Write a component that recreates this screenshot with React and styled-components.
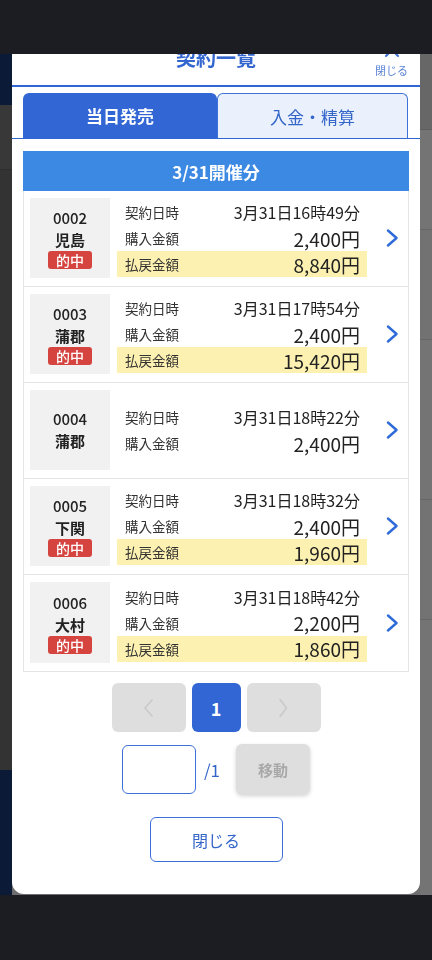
import React from 'react';
import styled, { createGlobalStyle } from 'styled-components';

const GlobalStyle = createGlobalStyle`
  html, body { margin: 0; padding: 0; }
  body {
    background: #6e6e6e;
    font-family: "Noto Sans CJK JP", "Noto Sans", sans-serif;
    overflow: hidden;
  }
  * { box-sizing: border-box; }
`;

/* ---------- backdrop (dimmed page behind the modal) ---------- */
const Backdrop = styled.div`
  width: 432px;
  height: 960px;
  display: flex;
  justify-content: space-between;
`;
const Strip = styled.div`
  width: 12px;
  display: flex;
  flex-direction: column;
`;
const Band = styled.div`
  height: ${(p) => p.h}px;
  background: ${(p) => p.c};
  border-bottom: ${(p) => (p.line ? `1px solid ${p.line}` : 'none')};
`;

const TopBar = styled.div`
  position: fixed;
  top: 0;
  left: 0;
  width: 432px;
  height: 54px;
  background: #1c1c23;
  z-index: 3;
`;
const BottomBar = styled.div`
  position: fixed;
  top: 895px;
  left: 0;
  width: 432px;
  height: 65px;
  background: #1c1c23;
  z-index: 3;
`;

/* ---------- modal ---------- */
const Modal = styled.div`
  position: fixed;
  top: 30px;
  left: 12px;
  width: 408px;
  height: 864px;
  background: #fff;
  border-radius: 12px;
  overflow: hidden;
  display: flex;
  flex-direction: column;
  z-index: 2;
`;
const Header = styled.div`
  position: relative;
  height: 57px;
  display: flex;
  align-items: center;
  justify-content: center;
  border-bottom: 2px solid #2f66d3;
`;
const Title = styled.h1`
  margin: 0;
  font-size: 20px;
  font-weight: 700;
  color: #3367cf;
  line-height: 1;
`;
const CloseX = styled.button`
  position: absolute;
  right: 12px;
  top: 11px;
  border: none;
  background: none;
  padding: 0;
  display: flex;
  flex-direction: column;
  align-items: center;
  gap: 4px;
  color: #5b83d6;
  font-family: inherit;
  font-size: 11px;
  line-height: 14px;
`;

const TabBar = styled.div`
  display: flex;
  padding: 6px 12px 0 11px;
  border-bottom: 1px solid #2f66d3;
`;
const Tab = styled.div`
  flex: ${(p) => (p.active ? '194px' : '191px')} 0 0;
  height: 45px;
  display: flex;
  align-items: center;
  justify-content: center;
  font-size: 17px;
  border-radius: 6px 6px 0 0;
  ${(p) =>
    p.active
      ? `background:#3166d4;color:#fff;font-weight:700;`
      : `background:#eaf1fd;color:#3466c9;border:1px solid #3f72d8;border-bottom:none;`}
`;

const Body = styled.div`
  padding: 12px 11px 0 11px;
  display: flex;
  flex-direction: column;
`;
const SectionHead = styled.div`
  height: 40px;
  background: #3b89e2;
  color: #fff;
  font-size: 17px;
  font-weight: 700;
  display: flex;
  align-items: center;
  justify-content: center;
`;
const List = styled.div`
  border: 1px solid #e4e4e4;
  border-top: none;
`;
const Card = styled.div`
  height: 96px;
  display: grid;
  grid-template-columns: 80px 250px 1fr;
  column-gap: 7px;
  padding: 7px 0 8px 6px;
  border-bottom: ${(p) => (p.last ? 'none' : '1px solid #e4e4e4')};
`;
const RaceBox = styled.div`
  background: #f1f1f1;
  display: flex;
  flex-direction: column;
  align-items: center;
  justify-content: center;
  color: #222;
`;
const RaceNo = styled.div`
  font-size: 15px;
  font-weight: 500;
  line-height: 22px;
`;
const Venue = styled.div`
  font-size: 15px;
  font-weight: 700;
  line-height: 22px;
`;
const Badge = styled.div`
  width: 44px;
  height: 18px;
  background: #d5443f;
  color: #fff;
  border-radius: 3px;
  font-size: 14px;
  font-weight: 500;
  line-height: 18px;
  text-align: center;
`;
const Info = styled.div`
  display: flex;
  flex-direction: column;
  justify-content: center;
`;
const Row = styled.div`
  height: 26px;
  display: flex;
  align-items: center;
  justify-content: space-between;
  padding: 0 7px 0 8px;
  background: ${(p) => (p.hl ? '#fdf1b1' : 'transparent')};
`;
const Label = styled.span`
  font-size: 13.5px;
  color: #333;
`;
const Value = styled.span`
  font-size: ${(p) => (p.big ? '19px' : '16px')};
  color: #222;
`;
const Arrow = styled.div`
  display: flex;
  align-items: center;
  padding-left: 12px;
`;

/* ---------- pagination ---------- */
const Pager = styled.div`
  margin-top: 11px;
  display: flex;
  justify-content: center;
  gap: 6px;
`;
const PageBtn = styled.div`
  width: ${(p) => (p.current ? 49 : 74)}px;
  height: 49px;
  border-radius: 6px;
  background: ${(p) => (p.current ? '#3166d4' : '#dedede')};
  color: #fff;
  font-size: 18px;
  font-weight: 700;
  display: flex;
  align-items: center;
  justify-content: center;
`;
const JumpRow = styled.div`
  margin-top: 12px;
  display: flex;
  justify-content: center;
  align-items: center;
`;
const PageInput = styled.div`
  width: 74px;
  height: 49px;
  border: 1.5px solid #3c70d8;
  border-radius: 6px;
`;
const Total = styled.span`
  margin: 0 16px 0 8px;
  font-size: 17px;
  color: #3466c9;
`;
const MoveBtn = styled.div`
  width: 74px;
  height: 50px;
  border-radius: 6px;
  background: #dedede;
  color: #a8a8a8;
  font-size: 15px;
  font-weight: 700;
  display: flex;
  align-items: center;
  justify-content: center;
  box-shadow: 0 2px 4px rgba(0, 0, 0, 0.18);
`;
const CloseBtn = styled.div`
  margin: 23px auto 0;
  width: 133px;
  height: 45px;
  border: 1.5px solid #3c70d8;
  border-radius: 6px;
  color: #3466c9;
  font-size: 16px;
  display: flex;
  align-items: center;
  justify-content: center;
`;

const Chevron = ({ color = '#2f6bd8', w = 13, h = 18, sw = 2.4 }) => (
  <svg width={w} height={h} viewBox={`0 0 ${w} ${h}`} fill="none">
    <path d={`M2 1.5 L${w - 2.5} ${h / 2} L2 ${h - 1.5}`} stroke={color} strokeWidth={sw} strokeLinecap="round" strokeLinejoin="round" />
  </svg>
);
const ChevronLeft = ({ color, w = 11, h = 20, sw = 1.6 }) => (
  <svg width={w} height={h} viewBox={`0 0 ${w} ${h}`} fill="none">
    <path d={`M${w - 2} 2 L2 ${h / 2} L${w - 2} ${h - 2}`} stroke={color} strokeWidth={sw} strokeLinecap="round" strokeLinejoin="round" />
  </svg>
);

const contracts = [
  { no: '0002', venue: '児島', hit: true, date: '3月31日16時49分', buy: '2,400円', pay: '8,840円' },
  { no: '0003', venue: '蒲郡', hit: true, date: '3月31日17時54分', buy: '2,400円', pay: '15,420円' },
  { no: '0004', venue: '蒲郡', hit: false, date: '3月31日18時22分', buy: '2,400円' },
  { no: '0005', venue: '下関', hit: true, date: '3月31日18時32分', buy: '2,400円', pay: '1,960円' },
  { no: '0006', venue: '大村', hit: true, date: '3月31日18時42分', buy: '2,200円', pay: '1,860円' },
];

export default function App() {
  return (
    <>
      <GlobalStyle />
      <Backdrop>
        <Strip>
          <Band h={105} c="#0b1a36" />
          <Band h={65} c="#383838" line="#2e2e2e" />
          <Band h={600} c="#333333" />
          <Band h={190} c="#0b1a36" />
        </Strip>
        <Strip>
          <Band h={130} c="#676767" line="#5e5e5e" />
          <Band h={100} c="#747474" line="#666" />
          <Band h={110} c="#727272" line="#666" />
          <Band h={160} c="#747474" line="#666" />
          <Band h={120} c="#737373" line="#666" />
          <Band h={340} c="#747474" />
        </Strip>
      </Backdrop>
      <TopBar />
      <BottomBar />
      <Modal>
        <Header>
          <Title>契約一覧</Title>
          <CloseX>
            <svg width="18" height="18" viewBox="0 0 18 18" fill="none">
              <path d="M3 3 L15 15 M15 3 L3 15" stroke="#3b6fd6" strokeWidth="2" strokeLinecap="round" />
            </svg>
            閉じる
          </CloseX>
        </Header>
        <TabBar>
          <Tab active>当日発売</Tab>
          <Tab>入金・精算</Tab>
        </TabBar>
        <Body>
          <SectionHead>3/31開催分</SectionHead>
          <List>
            {contracts.map((c, i) => (
              <Card key={c.no} last={i === contracts.length - 1}>
                <RaceBox>
                  <RaceNo>{c.no}</RaceNo>
                  <Venue>{c.venue}</Venue>
                  {c.hit && <Badge>的中</Badge>}
                </RaceBox>
                <Info>
                  <Row>
                    <Label>契約日時</Label>
                    <Value>{c.date}</Value>
                  </Row>
                  <Row>
                    <Label>購入金額</Label>
                    <Value big>{c.buy}</Value>
                  </Row>
                  {c.pay && (
                    <Row hl>
                      <Label>払戻金額</Label>
                      <Value big>{c.pay}</Value>
                    </Row>
                  )}
                </Info>
                <Arrow>
                  <Chevron />
                </Arrow>
              </Card>
            ))}
          </List>
          <Pager>
            <PageBtn>
              <ChevronLeft color="#c9c9c9" />
            </PageBtn>
            <PageBtn current>1</PageBtn>
            <PageBtn>
              <Chevron color="#c9c9c9" w={11} h={20} sw={1.6} />
            </PageBtn>
          </Pager>
          <JumpRow>
            <PageInput />
            <Total>/1</Total>
            <MoveBtn>移動</MoveBtn>
          </JumpRow>
          <CloseBtn>閉じる</CloseBtn>
        </Body>
      </Modal>
    </>
  );
}
